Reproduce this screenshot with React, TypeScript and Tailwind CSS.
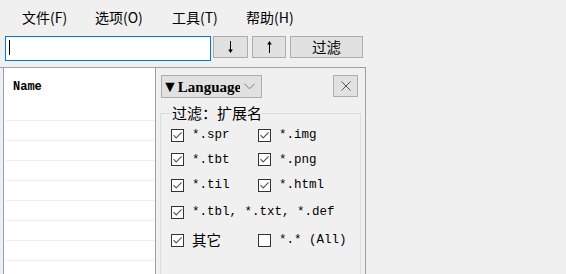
import React from 'react';

const menuItems = [
  { label: '文件(F)', w: 'w-[73px]' },
  { label: '选项(O)', w: 'w-[77px]' },
  { label: '工具(T)', w: 'w-[74px]' },
  { label: '帮助(H)', w: 'w-[60px]' },
];

type Opt = { label: string; checked: boolean; cjk?: boolean };

const filterRows: { h: string; items: Opt[] }[] = [
  { h: 'h-[24px]', items: [{ label: '*.spr', checked: true }, { label: '*.img', checked: true }] },
  { h: 'h-[25px]', items: [{ label: '*.tbt', checked: true }, { label: '*.png', checked: true }] },
  { h: 'h-[26px]', items: [{ label: '*.til', checked: true }, { label: '*.html', checked: true }] },
  { h: 'h-[28px]', items: [{ label: '*.tbl, *.txt, *.def', checked: true }] },
  { h: 'h-[28px]', items: [{ label: '其它', checked: true, cjk: true }, { label: '*.* (All)', checked: false }] },
];

const CheckBox: React.FC<{ checked: boolean }> = ({ checked }) => (
  <span className="w-[13px] h-[13px] border border-[#333333] bg-white flex items-center justify-center shrink-0">
    {checked && (
      <svg width="11" height="11" viewBox="0 0 11 11">
        <path d="M1.5 5.2 L4.2 8 L9.6 2.4" fill="none" stroke="#555555" strokeWidth="1.1" />
      </svg>
    )}
  </span>
);

const FilterOption: React.FC<{ opt: Opt; wide?: boolean }> = ({ opt, wide }) => (
  <div className={`flex items-center ${wide ? '' : 'w-[87px]'}`}>
    <CheckBox checked={opt.checked} />
    {opt.cjk ? (
      <span className="ml-[8px] text-[14.5px] leading-[16px] font-['Noto_Sans_CJK_SC',sans-serif]">{opt.label}</span>
    ) : (
      <span className="ml-[8px] text-[12.5px] leading-[16px] whitespace-pre font-['Liberation_Mono',monospace]">
        {opt.label}
      </span>
    )}
  </div>
);

const MenuBar = () => (
  <div className="h-[34px] flex items-center pl-[22px] text-[14px]">
    {menuItems.map((m) => (
      <span key={m.label} className={`${m.w} shrink-0`}>
        {m.label}
      </span>
    ))}
  </div>
);

const ToolButton: React.FC<{ className: string; children: React.ReactNode }> = ({ className, children }) => (
  <div className={`h-[22px] border border-[#adadad] bg-[#e1e1e1] flex items-center justify-center ${className}`}>
    {children}
  </div>
);

const Toolbar = () => (
  <div className="h-[33px] pt-[2px] pl-[5px] flex items-start">
    <div className="w-[206px] h-[25px] border border-[#0078d7] bg-white">
      <div className="ml-[3px] mt-[3px] w-px h-[15px] bg-black" />
    </div>
    <ToolButton className="ml-[2px] w-[35px]">
      <svg width="9" height="14" viewBox="0 0 9 14">
        <path d="M4.5 1 V10" stroke="#000" strokeWidth="1" />
        <path d="M2.2 9.5 H6.8 L4.5 13 Z" fill="#000" />
      </svg>
    </ToolButton>
    <ToolButton className="ml-[4px] w-[34px]">
      <svg width="9" height="14" viewBox="0 0 9 14">
        <path d="M4.5 4 V13" stroke="#000" strokeWidth="1" />
        <path d="M2.2 4.5 H6.8 L4.5 1 Z" fill="#000" />
      </svg>
    </ToolButton>
    <ToolButton className="ml-[4px] w-[73px] text-[14.5px]">过滤</ToolButton>
  </div>
);

const FileList = () => (
  <div className="w-[152px] h-full border-l border-[#8aa3c4] bg-white">
    <div className="h-[52px] pt-[11px] pl-[9px] text-[12px] leading-[16px] font-bold font-['Liberation_Mono',monospace]">
      Name
    </div>
    {Array.from({ length: 8 }).map((_, i) => (
      <div key={i} className="h-[20px] ml-[2px] border-t border-[#ececec]" />
    ))}
  </div>
);

const FilterPanel = () => (
  <div className="w-[211px] h-full border-l border-r border-[#a0a0a0] bg-[#f0f0f0]">
    <div className="flex justify-between items-start pt-[7px] pl-[5px] pr-[7px]">
      <div className="w-[101px] h-[23px] border border-[#adadad] bg-[#e1e1e1] flex items-center">
        <span className="w-[78px] overflow-hidden whitespace-nowrap text-[15px] leading-[18px] font-bold font-['Liberation_Serif',serif]">
          <span className="text-[16px]">▼</span>Language
        </span>
        <svg className="ml-[4px]" width="11" height="7" viewBox="0 0 11 7">
          <path d="M0.5 0.8 L5.5 5.8 L10.5 0.8" fill="none" stroke="#7a7a7a" strokeWidth="1" />
        </svg>
      </div>
      <div className="w-[25px] h-[22px] border border-[#adadad] bg-[#e1e1e1] flex items-center justify-center">
        <svg width="10" height="10" viewBox="0 0 10 10">
          <path d="M0.5 0.5 L9.5 9.5 M9.5 0.5 L0.5 9.5" stroke="#555555" strokeWidth="1" />
        </svg>
      </div>
    </div>
    <fieldset className="mt-[5px] mx-[4px] h-[180px] border border-[#dcdcdc]">
      <legend className="ml-[11px] h-[20px] leading-[20px] text-[15px]">过滤：扩展名</legend>
      {filterRows.map((row, i) => (
        <div key={i} className={`${row.h} flex items-center pl-[10px]`}>
          {row.items.map((opt) => (
            <FilterOption key={opt.label} opt={opt} wide={row.items.length === 1} />
          ))}
        </div>
      ))}
    </fieldset>
  </div>
);

export default function App() {
  return (
    <div className="w-[566px] h-[274px] overflow-hidden bg-[#f0f0f0] text-black font-['Noto_Sans_CJK_SC',sans-serif]">
      <MenuBar />
      <Toolbar />
      <div className="w-[366px] h-[207px] border-t border-[#a0a0a0] pl-[3px] flex overflow-hidden">
        <FileList />
        <FilterPanel />
      </div>
    </div>
  );
}
